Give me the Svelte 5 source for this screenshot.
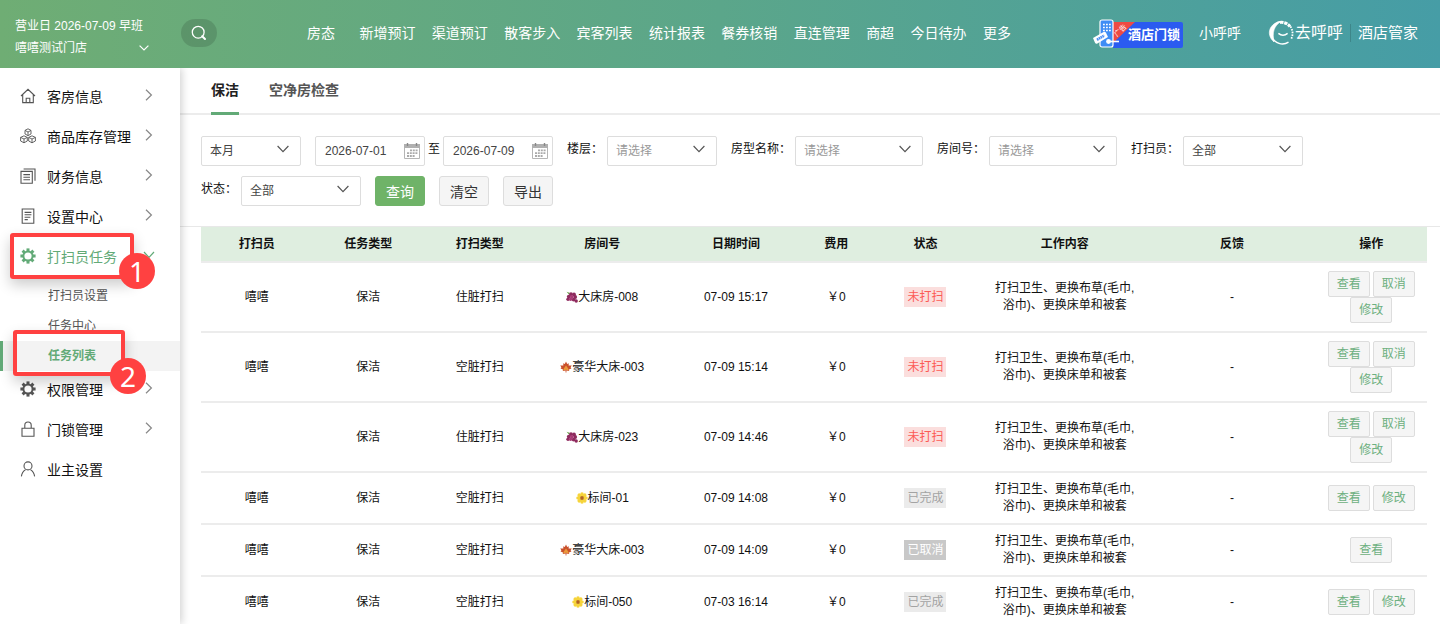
<script>
	const navItems = [
		'房态',
		'新增预订',
		'渠道预订',
		'散客步入',
		'宾客列表',
		'统计报表',
		'餐券核销',
		'直连管理',
		'商超',
		'今日待办',
		'更多'
	];

	const menu = [
		{ label: '客房信息', icon: 'home', arrow: true },
		{ label: '商品库存管理', icon: 'boxes', arrow: true },
		{ label: '财务信息', icon: 'papers', arrow: true },
		{ label: '设置中心', icon: 'doc', arrow: true },
		{
			label: '打扫员任务',
			icon: 'gear',
			arrow: true,
			open: true,
			step: 1,
			children: [
				{ label: '打扫员设置' },
				{ label: '任务中心' },
				{ label: '任务列表', active: true, step: 2 }
			]
		},
		{ label: '权限管理', icon: 'gear', arrow: true },
		{ label: '门锁管理', icon: 'lock', arrow: true },
		{ label: '业主设置', icon: 'user' }
	];

	const columns = [
		['打扫员', 'w10'],
		['任务类型', 'w10'],
		['打扫类型', 'w10'],
		['房间号', 'w12'],
		['日期时间', 'w12'],
		['费用', 'w6'],
		['状态', 'w10'],
		['工作内容', 'w15'],
		['反馈', 'w15'],
		['操作', 'w10']
	];

	const work = '打扫卫生、更换布草(毛巾,浴巾)、更换床单和被套';
	const statusClass = { 未打扫: 'todo', 已完成: 'done', 已取消: 'cancelled' };

	const rows = [
		{ name: '嘻嘻', type: '住脏打扫', icon: 'grape', room: '大床房-008', time: '07-09 15:17', status: '未打扫', actions: ['查看', '取消', '修改'] },
		{ name: '嘻嘻', type: '空脏打扫', icon: 'leaf', room: '豪华大床-003', time: '07-09 15:14', status: '未打扫', actions: ['查看', '取消', '修改'] },
		{ name: '', type: '住脏打扫', icon: 'grape', room: '大床房-023', time: '07-09 14:46', status: '未打扫', actions: ['查看', '取消', '修改'] },
		{ name: '嘻嘻', type: '空脏打扫', icon: 'flower', room: '标间-01', time: '07-09 14:08', status: '已完成', actions: ['查看', '修改'] },
		{ name: '嘻嘻', type: '空脏打扫', icon: 'leaf', room: '豪华大床-003', time: '07-09 14:09', status: '已取消', actions: ['查看'] },
		{ name: '嘻嘻', type: '空脏打扫', icon: 'flower', room: '标间-050', time: '07-03 16:14', status: '已完成', actions: ['查看', '修改'] }
	];

	const teeth = [0, 45, 90, 135, 180, 225, 270, 315];

	let startDate = $state('2026-07-01');
	let endDate = $state('2026-07-09');
	let tab = $state('保洁');
</script>

{#snippet menuIcon(name)}
	<svg class="menu-icon" viewBox="0 0 16 16" fill="none" stroke="currentColor" stroke-width="1.1" aria-hidden="true">
		{#if name === 'home'}
			<path d="M1 8 8 1.3 15 8M2.7 6.6V14.6H13.3V6.6M6.2 14.6V10.2H9.8V14.6" />
		{:else if name === 'boxes'}
			<g stroke-width="0.9">
				<path d="M8 .8 11 2.4V6L8 7.6 5 6V2.4ZM5 2.4 8 4 11 2.4M8 4V7.6" />
				<path d="M4 7.8 7.3 9.4V13L4 14.8.6 13V9.4ZM.6 9.4 4 11 7.3 9.4M4 11V14.8" />
				<path d="M12 7.8 15.4 9.4V13L12 14.8 8.7 13V9.4ZM8.7 9.4 12 11 15.4 9.4M12 11V14.8" />
			</g>
		{:else if name === 'papers'}
			<path d="M1 3.4H12.3V15.2H1ZM3.6 1H15V12.8M3.4 6.6H10M3.4 9.2H10M3.4 11.8H10" />
		{:else if name === 'doc'}
			<path d="M2.2 1H13.8V15.2H2.2ZM4.6 4.4H11.4M4.6 6.8H11.4M4.6 9.2H10.4M4.6 11.6H7.8" />
		{:else if name === 'gear'}
			<circle cx="8" cy="8" r="4.6" stroke-width="2" />
			{#each teeth as deg}
				<path d="M8 .4V3" stroke-width="3" transform="rotate({deg} 8 8)" />
			{/each}
		{:else if name === 'lock'}
			<path d="M2 7.2H14V15.2H2ZM4.8 7.2V4.2C4.8 0 11.2 0 11.2 4.2V7.2" />
		{:else}
			<circle cx="8" cy="4.9" r="4" />
			<path d="M1.4 15.4C1.8 11.6 3.6 9.8 5.6 8.6M14.6 15.4C14.2 11.6 12.4 9.8 10.4 8.6" />
		{/if}
	</svg>
{/snippet}

{#snippet roomIcon(name)}
	<svg class="room-icon" viewBox="0 0 12 12" aria-hidden="true">
		{#if name === 'grape'}
			<path d="M.6 .8 4 2 3 3.6Z" fill="#5d9a3c" />
			<g fill="#8e2a5e">
				<circle cx="5" cy="3.2" r="1.9" />
				<circle cx="8" cy="3.4" r="1.9" />
				<circle cx="2.8" cy="5.6" r="1.9" />
				<circle cx="9.2" cy="6" r="1.9" />
				<circle cx="2" cy="8.2" r="1.7" />
				<circle cx="7.6" cy="8.6" r="1.9" />
				<circle cx="10.2" cy="10" r="1.7" />
			</g>
			<g fill="#a93c76">
				<circle cx="5.8" cy="5.8" r="1.8" />
				<circle cx="4.6" cy="8.2" r="1.7" />
			</g>
		{:else if name === 'leaf'}
			<path d="M6 .4 7.2 3 8.8 2.2 8.6 4.6 11.8 4.4 10.6 6.2 11.4 7.4 9 8.4 9.2 10 6.4 9.4V11.6H5.6V9.4L2.8 10 3 8.4.6 7.4 1.4 6.2.2 4.4 3.4 4.6 3.2 2.2 4.8 3Z" fill="#c9502b" />
			<path d="M6 4.6 8 7.2 9 9.6 6 8.8 3 9.6 4 7.2Z" fill="#eb9a3b" />
		{:else}
			<g fill="#f6d43b">
				{#each teeth as deg}
					<ellipse cx="6" cy="2.4" rx="1.8" ry="2.2" transform="rotate({deg} 6 6)" />
				{/each}
			</g>
			<circle cx="6" cy="6" r="1.9" fill="#b4651d" />
		{/if}
	</svg>
{/snippet}

{#snippet calendarIcon()}
	<svg class="calendar" viewBox="0 0 16 16" aria-hidden="true">
		<path d="M.5 2.5H15.5V15.5H.5Z" fill="#fff" stroke="#b5b5b5" />
		<path d="M0 1H16V5H0Z" fill="#b0b0b0" />
		<path d="M3.5 0V3M12.5 0V3" stroke="#888" stroke-width="1.4" />
		<path d="M6 7.4H14M3 10.2H14M3 13H11" stroke="#aaa" stroke-width="1.8" stroke-dasharray="2 .8" />
	</svg>
{/snippet}

<div class="app">
	<header>
		<div class="shop">
			<div>营业日 2026-07-09 早班</div>
			<div class="shop-name">
				嘻嘻测试门店
				<svg width="10" height="6" viewBox="0 0 10 6" fill="none" stroke="#fff" stroke-width="1.2"><path d="M.6.6 5 5 9.4.6" /></svg>
			</div>
		</div>
		<button class="search" aria-label="搜索">
			<svg width="16" height="16" viewBox="0 0 16 16" fill="none" stroke="#fff">
				<circle cx="7.2" cy="7.2" r="5.9" stroke-width="1.3" />
				<path d="M11.2 11.2 14 14" stroke-width="2" stroke-linecap="round" />
			</svg>
		</button>
		<nav>
			{#each navItems as item}
				<a href="#top">{item}</a>
			{/each}
		</nav>
		<a class="ad" href="#lock">
			<svg class="ad-art" width="44" height="30" viewBox="0 0 44 30" aria-hidden="true">
				<path d="M20 3H42L20 24Z" fill="#ee4a43" />
				<rect x="7" y="1" width="13" height="27" rx="2" fill="#3f8df5" stroke="#fff" stroke-width="1.2" />
				<path d="M10 5.5H18M10 8.5H18M10 11.5H18" stroke="#fff" stroke-width="1.6" stroke-dasharray="1.8 1.2" />
				<path d="M0 19 10.6 13Q12.2 12.4 13 13.8L15 18 4.4 24.6Q2.8 25.2 2 23.8Z" fill="#fff" />
				<path d="M4 20.8 11.4 16.4" stroke="#4d8ff3" stroke-width="2.6" stroke-dasharray="1.6 .5" />
				<path d="M14 22.5H26" stroke="#fff" stroke-width="1.6" />
				<circle cx="15.5" cy="22.5" r="2.4" fill="#fff" />
				<text class="ad-mark" x="24" y="18" transform="rotate(-44 24 18)">广告</text>
			</svg>
			<span>酒店门锁</span>
		</a>
		<a class="assistant" href="#assistant">小呼呼</a>
		<a class="brand" href="#home">
			<svg width="26" height="26" viewBox="0 0 26 26" fill="none" stroke="#fff" aria-hidden="true">
				<path d="M12 1.6A11.3 11.3 0 1 0 20.5 22.2" stroke-width="1.4" />
				<path d="M13 1.4C2 2.6-3 14 6 22C4 12 6 6 13 1.4Z" fill="#fff" stroke-width=".6" />
				<path d="M12 2.4Q18 1.8 22 6.4" stroke-width="3" stroke-dasharray="3.4 .8" />
				<path d="M22.4 6.4Q26.4 13 23 19.4" stroke-width="1.8" stroke-dasharray="1.6 1.2" />
				<path d="M10.4 13.4Q15 17.2 19.6 13.4" stroke-width="1.4" />
			</svg>
			<span class="brand-name">去呼呼</span>
			<span class="brand-product">酒店管家</span>
		</a>
	</header>

	<div class="body">
		<aside>
			{#each menu as item}
				<a class="menu-item" class:open={item.open} href="#menu">
					{@render menuIcon(item.icon)}
					<span>{item.label}</span>
					{#if item.arrow}
						<svg class="arrow" viewBox="0 0 12 12" fill="none" stroke="currentColor" stroke-width="1.2">
							<path d={item.open ? 'M1 3 6 8.4 11 3' : 'M3 .8 8.4 6 3 11.2'} />
						</svg>
					{/if}
					{#if item.step}
						<span class="mark mark-item"><b>{item.step}</b></span>
					{/if}
				</a>
				{#if item.children}
					<div class="submenu">
						{#each item.children as child}
							<a class="sub-item" class:active={child.active} href="#sub">
								{child.label}
								{#if child.step}
									<span class="mark mark-sub"><b>{child.step}</b></span>
								{/if}
							</a>
						{/each}
					</div>
				{/if}
			{/each}
		</aside>

		<main>
			<div class="tabs">
				{#each ['保洁', '空净房检查'] as name}
					<button class="tab" class:current={tab === name} onclick={() => (tab = name)}>{name}</button>
				{/each}
			</div>

			<div class="filters">
				<select class="period" aria-label="周期"><option>本月</option></select>
				<div class="dates">
					<label class="date">
						<input type="text" aria-label="开始日期" bind:value={startDate} />
						{@render calendarIcon()}
					</label>
					<span>至</span>
					<label class="date">
						<input type="text" aria-label="结束日期" bind:value={endDate} />
						{@render calendarIcon()}
					</label>
				</div>
				<label class="field">楼层：<select class="floor empty"><option>请选择</option></select></label>
				<label class="field">房型名称：<select class="room empty"><option>请选择</option></select></label>
				<label class="field">房间号：<select class="room empty"><option>请选择</option></select></label>
				<label class="field">打扫员：<select><option>全部</option></select></label>
				<label class="field">状态：<select><option>全部</option></select></label>
				<button class="btn primary">查询</button>
				<button class="btn">清空</button>
				<button class="btn">导出</button>
			</div>

			<div class="list">
				<table>
					<thead>
						<tr>
							{#each columns as [title, width]}
								<th class={width}>{title}</th>
							{/each}
						</tr>
					</thead>
					<tbody>
						{#each rows as row}
							<tr>
								<td>{row.name}</td>
								<td>保洁</td>
								<td>{row.type}</td>
								<td>{@render roomIcon(row.icon)}{row.room}</td>
								<td>{row.time}</td>
								<td>￥0</td>
								<td><span class="tag {statusClass[row.status]}">{row.status}</span></td>
								<td>{work}</td>
								<td>-</td>
								<td class="ops">
									<div class="actions">
										{#each row.actions as action}
											<button>{action}</button>
										{/each}
									</div>
								</td>
							</tr>
						{/each}
					</tbody>
				</table>
			</div>
		</main>
	</div>
</div>

<style>
	:global(body) {
		margin: 0;
		background: #fff;
	}
	.app {
		display: flex;
		flex-direction: column;
		height: 100vh;
		font-family: 'Liberation Sans', 'Noto Sans CJK SC', sans-serif;
		font-size: 12px;
		color: #111;
	}
	.app * {
		box-sizing: border-box;
	}
	a {
		color: inherit;
		text-decoration: none;
	}
	button,
	input,
	select {
		font: inherit;
	}

	header {
		display: flex;
		align-items: center;
		flex: none;
		height: 68px;
		padding-right: 22px;
		padding-bottom: 2px;
		color: #fff;
		background: linear-gradient(90deg, #6fad74, #5ba68a 50%, #469da6);
	}
	.shop {
		width: 181px;
		padding: 8px 32px 0 15px;
		line-height: 22px;
	}
	.shop-name {
		display: flex;
		align-items: center;
		justify-content: space-between;
	}
	.search {
		display: flex;
		align-items: center;
		justify-content: center;
		width: 36px;
		height: 28px;
		padding: 0;
		border: none;
		border-radius: 14px;
		background: rgba(0, 0, 0, 0.13);
	}
	nav {
		display: flex;
		flex: 1;
		justify-content: space-between;
		margin: 0 82px 0 90px;
		padding-bottom: 2px;
		font-size: 14px;
		white-space: nowrap;
	}
	nav a:first-child {
		margin-right: 8px;
	}
	.ad {
		position: relative;
		width: 90px;
		height: 26px;
		margin-top: 4px;
		padding-left: 35px;
		border-radius: 2px;
		font-size: 13px;
		font-weight: bold;
		line-height: 26px;
		white-space: nowrap;
		background: linear-gradient(90deg, transparent 20px, #2b5bf0 20px);
	}
	.ad-art {
		position: absolute;
		left: 0;
		top: -3px;
		overflow: visible;
	}
	.ad-mark {
		fill: #fff;
		font-size: 7px;
		font-weight: normal;
	}
	.assistant {
		margin-left: 16px;
		padding-bottom: 2px;
		font-size: 14px;
	}
	.brand {
		display: flex;
		align-items: center;
		margin-left: 27px;
		font-size: 16px;
		line-height: 18px;
		white-space: nowrap;
	}
	.brand-name {
		margin-left: 1px;
	}
	.brand-product {
		margin-left: 7px;
		padding-left: 7px;
		border-left: 1px solid rgba(0, 0, 0, 0.15);
		font-size: 15px;
	}

	.body {
		display: flex;
		flex: 1;
		min-height: 0;
	}
	aside {
		position: relative;
		flex: none;
		width: 180px;
		padding-top: 8px;
		background: #fff;
		box-shadow: 2px 0 8px rgba(0, 0, 0, 0.18);
		clip-path: inset(0 -14px 0 0);
	}
	.menu-item {
		position: relative;
		display: flex;
		align-items: center;
		height: 40px;
		padding: 0 25px 0 20px;
		font-size: 14px;
	}
	.menu-icon {
		width: 16px;
		height: 16px;
		margin-right: 11px;
		color: #555;
	}
	.arrow {
		width: 12px;
		height: 12px;
		margin-left: auto;
		margin-bottom: 2px;
		color: #888;
	}
	.open,
	.open .menu-icon,
	.open .arrow {
		color: #62aa77;
	}
	.submenu {
		margin-bottom: -2px;
		padding-top: 5px;
	}
	.sub-item {
		position: relative;
		display: block;
		height: 30px;
		padding-left: 48px;
		line-height: 30px;
		color: #555;
	}
	.sub-item.active {
		padding-left: 45px;
		border-left: 3px solid #62aa77;
		font-weight: bold;
		color: #62aa77;
		background: #f3f3f3;
	}

	/* numbered step markers drawn over the menu */
	.mark {
		position: absolute;
		z-index: 2;
		height: 46px;
		border: 4px solid #ff4141;
		border-radius: 3px;
		box-shadow: 0 6px 14px rgba(0, 0, 0, 0.2);
	}
	.mark b {
		position: absolute;
		right: -25px;
		bottom: -14px;
		width: 36px;
		height: 36px;
		border-radius: 50%;
		font: 28px/36px 'Noto Sans', sans-serif;
		text-align: center;
		color: #fff;
		background: #ff4141;
	}
	.mark-item {
		left: 10px;
		top: -3px;
		width: 124px;
	}
	.mark-sub {
		left: 10px;
		top: -11px;
		width: 112px;
	}
	.mark-sub b {
		bottom: -22px;
	}

	main {
		flex: 1;
		min-width: 0;
		overflow: auto;
		scrollbar-width: none;
	}
	.tabs {
		display: flex;
		gap: 30px;
		height: 47px;
		padding-left: 31px;
		border-bottom: 2px solid #ececec;
	}
	.tab {
		height: 47px;
		padding: 0 0 3px;
		border: none;
		border-bottom: 3px solid transparent;
		font-size: 14px;
		font-weight: bold;
		color: #555;
		background: none;
	}
	.tab.current {
		border-color: #62aa77;
		color: #222;
	}

	.filters {
		display: flex;
		flex-wrap: wrap;
		gap: 10px 14px;
		padding: 21px 13px 20px 21px;
		border-bottom: 1px solid #e8e8e8;
	}
	.field {
		display: flex;
		line-height: 26px;
	}
	.dates {
		display: flex;
		line-height: 26px;
	}
	.dates span {
		padding: 0 3px;
	}
	.date {
		position: relative;
		display: block;
	}
	select,
	.date input {
		display: block;
		width: 120px;
		height: 30px;
		padding: 0 8px;
		border: 1px solid #ddd;
		border-radius: 2px;
		line-height: normal;
		color: #444;
		background: #fff;
		outline: none;
	}
	select {
		appearance: none;
		background: #fff url("data:image/svg+xml,%3Csvg xmlns='http://www.w3.org/2000/svg' width='12' height='8' fill='none' stroke='%23555' stroke-width='1.2'%3E%3Cpath d='M.6 1 6 6.6 11.4 1'/%3E%3C/svg%3E") no-repeat right 11px top 8px;
	}
	.field select {
		margin-left: 4px;
	}
	select.empty {
		color: #999;
	}
	select.period {
		width: 100px;
	}
	select.floor {
		width: 110px;
	}
	select.room {
		width: 128px;
	}
	.date input {
		width: 110px;
		padding: 0 9px;
	}
	.calendar {
		position: absolute;
		right: 5px;
		top: 7px;
		width: 16px;
		height: 16px;
	}
	.btn {
		width: 50px;
		height: 30px;
		padding: 0;
		border: 1px solid #ddd;
		border-radius: 3px;
		font-size: 14px;
		color: #333;
		background: #f5f5f5;
	}
	.btn.primary {
		border-color: #6fb368;
		color: #fff;
		background: #6fb368;
	}

	.list {
		padding: 0 13px 0 21px;
	}
	table {
		width: 100%;
		table-layout: fixed;
		border-spacing: 0;
		text-align: center;
		line-height: 17px;
	}
	th {
		height: 36px;
		padding: 0;
		border-bottom: 2px solid #ececec;
		background: #dfeee0;
	}
	/* relative column weights, the table spreads the rest */
	.w6 {
		width: 60px;
	}
	.w10 {
		width: 100px;
	}
	.w12 {
		width: 120px;
	}
	.w15 {
		width: 150px;
	}
	td {
		padding: 8px;
		border-bottom: 2px solid #ececec;
	}
	td.ops {
		padding: 8px 0;
	}
	.room-icon {
		width: 12px;
		height: 12px;
		vertical-align: -2px;
	}
	.tag {
		display: inline-block;
		padding: 0 3px;
		line-height: 20px;
	}
	.todo {
		color: #fb5a55;
		background: #fbdedd;
	}
	.done {
		color: #a3a3a3;
		background: #ebebeb;
	}
	.cancelled {
		color: #fff;
		background: #c8c8c8;
	}
	.actions {
		display: flex;
		flex-wrap: wrap;
		justify-content: center;
		column-gap: 3px;
	}
	.actions button {
		width: 42px;
		height: 26px;
		padding: 0;
		border: 1px solid #ddd;
		border-radius: 2px;
		color: #6db080;
		background: #f5f5f5;
	}
</style>
